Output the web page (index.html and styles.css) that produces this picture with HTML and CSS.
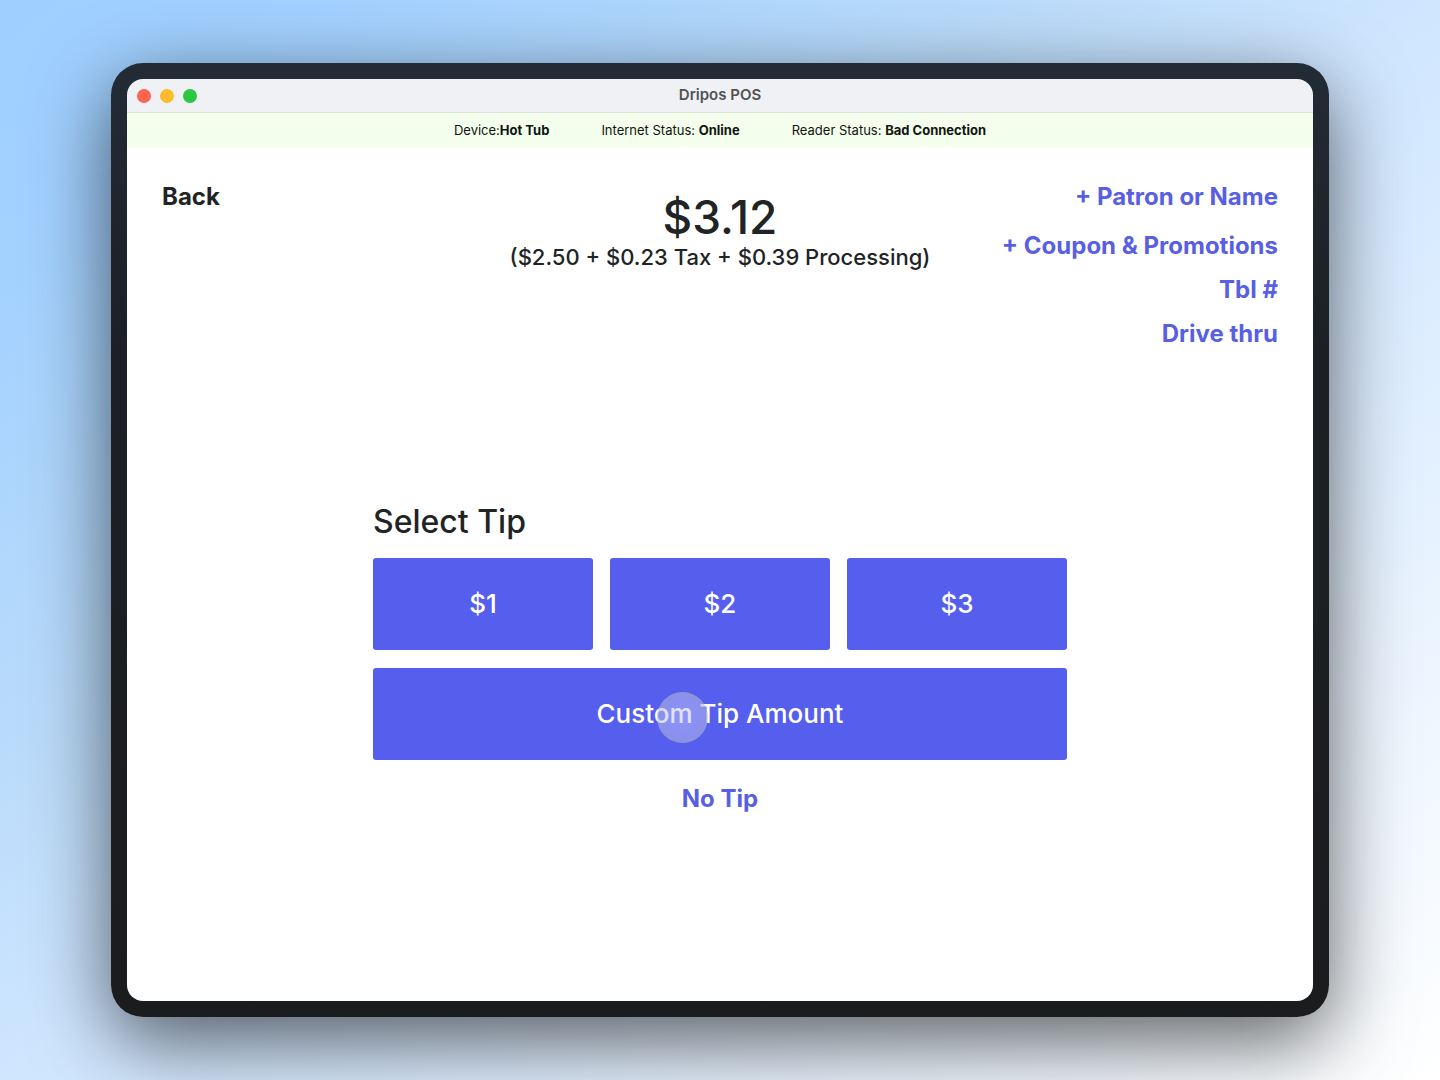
FILE: index.html
```html
<!DOCTYPE html>
<html lang="en">
<head>
<meta charset="utf-8">
<meta name="viewport" content="width=device-width, initial-scale=1">
<title>Dripos POS</title>
<link rel="stylesheet" href="styles.css">
</head>
<body>
<div class="window">
  <header class="titlebar">
    <div class="lights">
      <button class="light close" aria-label="Close"></button>
      <button class="light minimize" aria-label="Minimize"></button>
      <button class="light expand" aria-label="Expand"></button>
    </div>
    <span class="title">Dripos POS</span>
  </header>
  <div class="status">
    <span>Device:<b>Hot Tub</b></span>
    <span>Internet Status: <b>Online</b></span>
    <span>Reader Status: <b>Bad Connection</b></span>
  </div>
  <main class="content">
    <section class="order">
      <a class="link back" href="#">Back</a>
      <div class="total">
        <h1 class="amount">$3.12</h1>
        <p class="breakdown">($2.50 + $0.23 Tax + $0.39 Processing)</p>
      </div>
      <nav class="options">
        <a class="link first" href="#">+ Patron or Name</a>
        <a class="link" href="#">+ Coupon &amp; Promotions</a>
        <a class="link" href="#">Tbl #</a>
        <a class="link" href="#">Drive thru</a>
      </nav>
    </section>
    <section class="tip">
      <h2 class="tip-heading">Select Tip</h2>
      <div class="tip-grid">
        <button class="tip-button">$1</button>
        <button class="tip-button">$2</button>
        <button class="tip-button">$3</button>
        <button class="tip-button custom">Custom Tip Amount<span class="touch"></span></button>
      </div>
      <a class="link no-tip" href="#">No Tip</a>
    </section>
  </main>
</div>
</body>
</html>
```
FILE: styles.css
```css
* {
  box-sizing: border-box;
}

body {
  margin: 0;
  min-height: 100vh;
  padding: 63px 111px;
  display: flex;
  background: linear-gradient(to bottom right, #9ecfff 0%, #a4d2ff 14%, #bbdcfb 36%, #cfe6ff 50%, #ffffff 100%);
  color: #202425;
  font-family: Inter, "Liberation Sans", sans-serif;
}

.window {
  flex: 1;
  display: flex;
  flex-direction: column;
  padding: 16px;
  border-radius: 32px;
  background: linear-gradient(#232b35, #1c2026 30%, #1b1c1d);
  box-shadow: 0 24px 80px rgba(0, 0, 0, 0.62);
}

.titlebar {
  display: grid;
  grid-template-columns: 1fr auto 1fr;
  align-items: center;
  height: 34px;
  padding: 0 10px;
  border-bottom: 1px solid #dde2da;
  border-radius: 16px 16px 0 0;
  background: #f0f1f4;
}

.lights {
  display: flex;
  gap: 9px;
}

.light {
  width: 14px;
  height: 14px;
  padding: 0;
  border: 0;
  border-radius: 50%;
}

.close { background: #fb6552; }
.minimize { background: #fdbb2e; }
.expand { background: #29c840; }

.title {
  padding-bottom: 2px;
  color: #505254;
  font-size: 15px;
  font-weight: 600;
  line-height: 20px;
}

.status {
  display: flex;
  justify-content: center;
  gap: 52px;
  background: #f3ffec;
  color: #101410;
  font-size: 13px;
  line-height: 34px;
}

.content {
  flex: 1;
  padding: 32px 35px 48px;
  border-radius: 0 0 16px 16px;
  background: #fff;
}

.order {
  display: grid;
  grid-template-columns: 1fr auto 1fr;
  align-items: start;
}

.link {
  color: #585fe3;
  font-size: 24px;
  font-weight: 700;
  line-height: 36px;
  text-decoration: none;
}

.back {
  color: #202425;
}

.total {
  padding-top: 10px;
  text-align: center;
}

.amount {
  margin: 0;
  font-size: 46px;
  font-weight: 500;
  line-height: 56px;
}

.breakdown {
  margin: 0;
  font-size: 22px;
  font-weight: 500;
  line-height: 24px;
}

.options {
  display: flex;
  flex-direction: column;
  align-items: flex-end;
  gap: 8px;
}

.first {
  padding-bottom: 5px;
}

.tip {
  max-width: 694px;
  margin: 148px auto 0;
  display: flex;
  flex-direction: column;
}

.tip-heading {
  margin: 0 0 14px;
  font-size: 32px;
  font-weight: 500;
  line-height: 44px;
}

.tip-grid {
  display: grid;
  grid-template-columns: repeat(3, 1fr);
  gap: 18px 17px;
}

.tip-button {
  position: relative;
  min-height: 92px;
  border: 0;
  border-radius: 3px;
  background: #565eed;
  color: #fff;
  font: 500 26px/36px Inter, "Liberation Sans", sans-serif;
}

.custom {
  grid-column: 1 / -1;
}

.touch {
  position: absolute;
  top: 24px;
  left: calc(50% - 63px);
  width: 51px;
  height: 51px;
  border-radius: 50%;
  background: radial-gradient(circle, rgba(200, 200, 255, 0.5) 0%, rgba(190, 195, 245, 0.5) 50%, rgba(175, 182, 210, 0.6) 72%);
}

.no-tip {
  align-self: center;
  margin-top: 21px;
}
```
